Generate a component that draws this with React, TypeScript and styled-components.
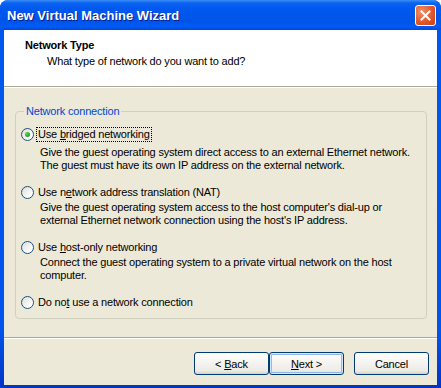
import React, { useState } from 'react';
import styled, { createGlobalStyle } from 'styled-components';

const GlobalStyle = createGlobalStyle`
	html, body {
		margin: 0;
		padding: 0;
		background: #ffffff;
	}
	* {
		box-sizing: border-box;
	}
`;

const options = [
	{
		id: 'bridged',
		label: ['Use ', 'b', 'ridged networking'],
		desc: [
			'Give the guest operating system direct access to an external Ethernet network.',
			'The guest must have its own IP address on the external network.',
		],
	},
	{
		id: 'nat',
		label: ['Use n', 'e', 'twork address translation (NAT)'],
		desc: [
			"Give the guest operating system access to the host computer's dial-up or",
			"external Ethernet network connection using the host's IP address.",
		],
	},
	{
		id: 'hostonly',
		label: ['Use ', 'h', 'ost-only networking'],
		desc: ['Connect the guest operating system to a private virtual network on the host', 'computer.'],
	},
	{
		id: 'none',
		label: ['Do no', 't', ' use a network connection'],
		desc: [],
	},
];

const CloseIcon = () => (
	<svg width="11" height="11" viewBox="0 0 11 11">
		<path d="M1.5 1.5 L9.5 9.5 M9.5 1.5 L1.5 9.5" stroke="#ffffff" strokeWidth="2" strokeLinecap="square" />
	</svg>
);

const App = () => {
	const [selected, setSelected] = useState('bridged');

	return (
		<>
			<GlobalStyle />
			<Window>
				<TitleBar>
					<Title>New Virtual Machine Wizard</Title>
					<CloseBtn>
						<CloseIcon />
					</CloseBtn>
				</TitleBar>
				<Panel>
					<Header>
						<HeaderTitle>Network Type</HeaderTitle>
						<HeaderSub>What type of network do you want to add?</HeaderSub>
					</Header>
					<Content>
						<GroupBox>
							<Legend>Network connection</Legend>
							{options.map((opt, index) => (
								<Option key={opt.id} $first={index === 0}>
									<OptionRow onClick={() => setSelected(opt.id)}>
										<Radio $checked={selected === opt.id} />
										<OptionLabel $focused={selected === opt.id}>
											{opt.label[0]}
											<u>{opt.label[1]}</u>
											{opt.label[2]}
										</OptionLabel>
									</OptionRow>
									{opt.desc.length > 0 && (
										<Description $first={index === 0}>
											{opt.desc.map((line) => (
												<div key={line}>{line}</div>
											))}
										</Description>
									)}
								</Option>
							))}
						</GroupBox>
					</Content>
					<Footer>
						<Button>
							&lt; <u>B</u>ack
						</Button>
						<Button $default>
							<u>N</u>ext &gt;
						</Button>
						<Button $gap>Cancel</Button>
					</Footer>
				</Panel>
			</Window>
		</>
	);
};

export default App;

const Window = styled.div`
	width: 441px;
	height: 388px;
	display: flex;
	flex-direction: column;
	background: linear-gradient(to bottom, #0058ee 0%, #0055ea 85%, #0035c8 100%);
	border-radius: 8px 8px 0 0;
	font-family: Tahoma, 'Liberation Sans', Arial, sans-serif;
	font-size: 11px;
	letter-spacing: -0.18px;
	color: #000000;
	overflow: hidden;
`;

const TitleBar = styled.div`
	height: 30px;
	flex: none;
	display: flex;
	align-items: center;
	justify-content: space-between;
	padding: 0 5px 0 7px;
	background: linear-gradient(
		to bottom,
		#3d8df5 0%,
		#0a63f0 10%,
		#0058ee 30%,
		#0054e8 70%,
		#005bf5 88%,
		#0048d8 100%
	);
`;

const Title = styled.span`
	font-family: 'Trebuchet MS', 'Liberation Sans', Arial, sans-serif;
	font-weight: 700;
	font-size: 13px;
	letter-spacing: 0;
	color: #ffffff;
	text-shadow: 1px 1px 0 #0a1e8a;
	padding-top: 1px;
`;

const CloseBtn = styled.div`
	width: 21px;
	height: 21px;
	display: flex;
	align-items: center;
	justify-content: center;
	border: 1px solid #ffffff;
	border-radius: 3px;
	background: radial-gradient(circle at 30% 30%, #f0916b 0%, #e2582b 55%, #c8401a 100%);
`;

const Panel = styled.div`
	flex: 1;
	display: flex;
	flex-direction: column;
	margin: 0 4px 3px 4px;
	background: #ece9d8;
`;

const Header = styled.div`
	height: 57px;
	flex: none;
	background: #ffffff;
	border-bottom: 1px solid #aca899;
	box-shadow: 0 1px 0 #ffffff;
	padding: 8px 0 0 21px;
`;

const HeaderTitle = styled.div`
	font-weight: 700;
	line-height: 15px;
`;

const HeaderSub = styled.div`
	line-height: 15px;
	margin-top: 1px;
	padding-left: 22px;
`;

const Content = styled.div`
	flex: 1;
	padding: 18px 10px 0 11px;
	border-bottom: 1px solid #aca899;
	box-shadow: 0 1px 0 #ffffff;
`;

const GroupBox = styled.fieldset`
	margin: 0;
	height: 214px;
	border: 1px solid #d0d0bf;
	border-radius: 4px;
	padding: 9px 5px 0 5px;
`;

const Legend = styled.legend`
	color: #0046d5;
	padding: 0 2px;
	margin-left: 3px;
	line-height: 13px;
`;

const Option = styled.div<{ $first: boolean }>`
	margin-top: ${(props) => (props.$first ? '0' : '13px')};
	white-space: nowrap;
`;

const OptionRow = styled.div`
	display: flex;
	align-items: center;
	height: 15px;
	gap: 3px;
	cursor: default;
`;

const Radio = styled.span<{ $checked: boolean }>`
	position: relative;
	width: 13px;
	height: 13px;
	flex: none;
	border-radius: 50%;
	border: 1px solid #1c5180;
	background: linear-gradient(135deg, #dcdcd7 0%, #ffffff 80%);
	&::after {
		content: '';
		display: ${(props) => (props.$checked ? 'block' : 'none')};
		position: absolute;
		left: 3px;
		top: 3px;
		width: 5px;
		height: 5px;
		border-radius: 50%;
		background: radial-gradient(circle at 35% 35%, #55d655 0%, #21a121 70%, #1a8a1a 100%);
	}
`;

const OptionLabel = styled.span<{ $focused: boolean }>`
	line-height: 13px;
	padding: 0 1px;
	outline: ${(props) => (props.$focused ? '1px dotted #000000' : 'none')};
`;

const Description = styled.div<{ $first: boolean }>`
	margin-top: ${(props) => (props.$first ? '4px' : '1px')};
	padding-left: 19px;
	line-height: 13px;
`;

const Footer = styled.div`
	height: 47px;
	flex: none;
	display: flex;
	justify-content: flex-end;
	align-items: flex-start;
	padding: 14px 8px 0 0;
`;

const Button = styled.button<{ $default?: boolean; $gap?: boolean }>`
	width: 75px;
	height: 23px;
	margin-left: ${(props) => (props.$gap ? '10px' : '0')};
	font-family: inherit;
	font-size: 11px;
	letter-spacing: -0.18px;
	color: #000000;
	border: 1px solid #003c74;
	border-radius: 3px;
	background: linear-gradient(to bottom, #ffffff 0%, #f6f5f1 40%, #ecebe6 85%, #d6d0c5 100%);
	box-shadow: ${(props) => (props.$default ? 'inset 0 0 0 1px #cee7ff, inset 0 0 0 2px #98b8ea' : 'none')};
	padding: 0;
	u {
		text-decoration: underline;
	}
`;
